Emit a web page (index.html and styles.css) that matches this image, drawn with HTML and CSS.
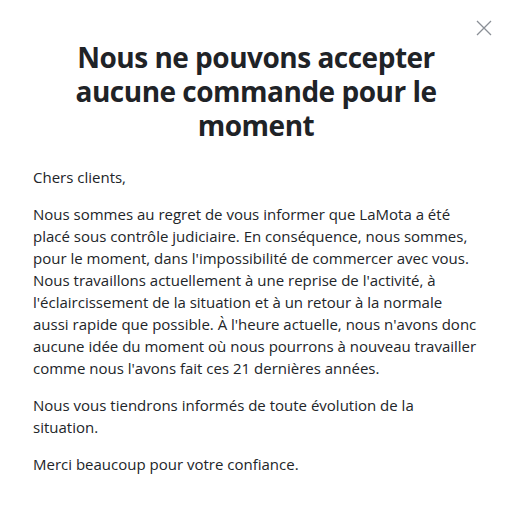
FILE: index.html
```html
<!DOCTYPE html>
<html lang="fr">
<head>
<meta charset="utf-8">
<title>LaMota</title>
<link rel="stylesheet" href="styles.css">
</head>
<body>
<div class="modal">
  <button class="close" aria-label="Fermer">
    <svg width="16" height="16" viewBox="0 0 16 16" aria-hidden="true"><path d="M1 1 L15 15 M15 1 L1 15" stroke="#8a8f96" stroke-width="1.3" fill="none"/></svg>
  </button>
  <h1 class="title">Nous ne pouvons accepter aucune commande pour le moment</h1>
  <div class="content">
    <p>Chers clients,</p>
    <p>Nous sommes au regret de vous informer que LaMota a été placé sous contrôle judiciaire. En conséquence, nous sommes, pour le moment, dans l'impossibilité de commercer avec vous. Nous travaillons actuellement à une reprise de l'activité, à l'éclaircissement de la situation et à un retour à la normale aussi rapide que possible. À l'heure actuelle, nous n'avons donc aucune idée du moment où nous pourrons à nouveau travailler comme nous l'avons fait ces 21 dernières années.</p>
    <p>Nous vous tiendrons informés de toute évolution de la situation.</p>
    <p>Merci beaucoup pour votre confiance.</p>
  </div>
</div>
</body>
</html>
```

FILE: styles.css
```css
html, body {
  margin: 0;
  padding: 0;
  background: #ffffff;
}
body {
  font-family: "Open Sans", "Liberation Sans", sans-serif;
  color: #222529;
}
.modal {
  position: relative;
  width: 512px;
  box-sizing: border-box;
  padding: 40px 33px 0 33px;
}
.close {
  position: absolute;
  top: 20px;
  right: 20px;
  width: 16px;
  height: 16px;
  padding: 0;
  border: 0;
  background: none;
  cursor: pointer;
  display: flex;
}
.title {
  margin: 0 0 24px 0;
  padding: 0 30px;
  text-align: center;
  font-size: 28px;
  line-height: 34px;
  font-weight: 700;
  letter-spacing: -0.5px;
  color: #1f2327;
}
.content {
  font-size: 15px;
  line-height: 22px;
}
.content p {
  margin: 0 0 15px 0;
}
```
